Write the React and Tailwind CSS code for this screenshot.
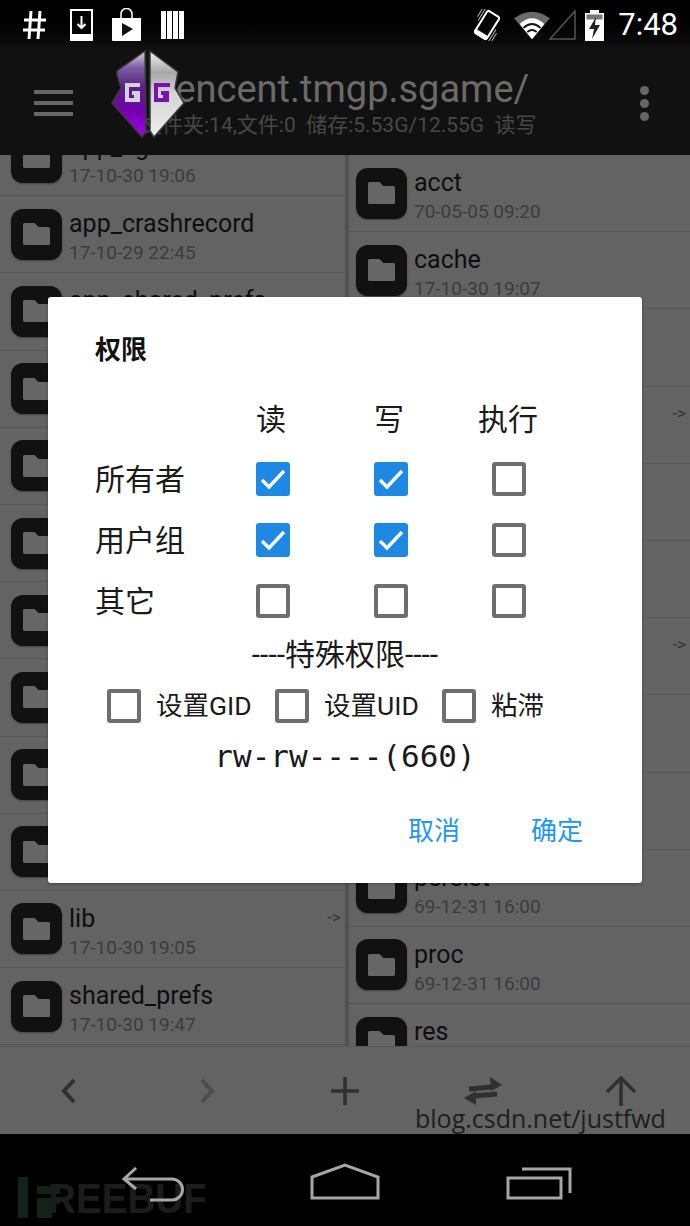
const sans = "font-['Roboto',sans-serif]";
const cjk = "font-['Roboto','Noto_Sans_CJK_SC',sans-serif]";

const leftRows = [
  { name: "app_cgi", date: "17-10-30 19:06" },
  { name: "app_crashrecord", date: "17-10-29 22:45" },
  { name: "app_shared_prefs", date: "" },
  { name: "", date: "" },
  { name: "", date: "" },
  { name: "", date: "" },
  { name: "", date: "" },
  { name: "", date: "" },
  { name: "", date: "" },
  { name: "", date: "" },
  { name: "lib", date: "17-10-30 19:05", link: true },
  { name: "shared_prefs", date: "17-10-30 19:47" },
];

const rightRows = [
  { name: "acct", date: "70-05-05 09:20" },
  { name: "cache", date: "17-10-30 19:07" },
  { name: "", date: "" },
  { name: "", date: "", link: true },
  { name: "", date: "" },
  { name: "", date: "" },
  { name: "", date: "", link: true },
  { name: "", date: "" },
  { name: "", date: "" },
  { name: "persist", date: "69-12-31 16:00" },
  { name: "proc", date: "69-12-31 16:00" },
  { name: "res", date: "" },
];

function FolderTile() {
  return (
    <div className="w-[51px] h-[51px] shrink-0 rounded-[12px] bg-[#111111] flex items-center justify-center shadow-[0_1px_2px_rgba(0,0,0,0.35)]">
      <svg width="27" height="22" viewBox="0 0 27 22">
        <path d="M1.500 0h10l4 4H25.500A1.500 1.500 0 0 1 27 5.500v15a1.500 1.500 0 0 1-1.500 1.500h-24A1.500 1.500 0 0 1 0 20.500v-19A1.500 1.500 0 0 1 1.500 0z" fill="#666666" />
      </svg>
    </div>
  );
}

function FileRow({ row, inset }) {
  return (
    <div className={`relative h-[77.2px] shrink-0 border-b border-[#575757] flex items-center gap-[7px] ${inset}`}>
      <FolderTile />
      <div className={`${sans} flex flex-col`}>
        <span className="pt-[6px] h-[36px] text-[25px] leading-[30px] text-[#0e0e0e] whitespace-nowrap">{row.name}</span>
        <span className="pt-[1px] h-[26px] text-[19px] leading-[26px] text-[#3c3c3c] whitespace-nowrap">{row.date}</span>
      </div>
      {row.link && (
        <span className={`${sans} absolute right-[4px] top-[14px] text-[17px] leading-[24px] text-[#333333]`}>-&gt;</span>
      )}
    </div>
  );
}

function Check({ on }) {
  if (on) {
    return (
      <div className="w-[34px] h-[34px] rounded-[3px] bg-[#1e88e5] flex items-center justify-center">
        <svg width="28" height="24" viewBox="0 0 28 24">
          <path d="M3 13l7 7L25 4" fill="none" stroke="#ffffff" strokeWidth="3.4" />
        </svg>
      </div>
    );
  }
  return <div className="w-[34px] h-[34px] rounded-[3px] border-4 border-[#6e6e6e] bg-white" />;
}

function PermRow({ label, vals }) {
  return (
    <div className="flex items-center h-[34px] mb-[27px]">
      <span className="w-[161px] pt-[2px] text-[30px] leading-[34px] text-[#1a1a1a]">{label}</span>
      <div className="w-[34px] shrink-0"><Check on={vals[0]} /></div>
      <div className="w-[34px] shrink-0 ml-[84px]"><Check on={vals[1]} /></div>
      <div className="w-[34px] shrink-0 ml-[84px]"><Check on={vals[2]} /></div>
    </div>
  );
}

function Logo() {
  return (
    <svg className="absolute left-[110px] top-[49px]" width="76" height="90" viewBox="0 0 76 90">
      <defs>
        <linearGradient id="pl" x1="0" y1="0" x2="0" y2="1">
          <stop offset="0" stopColor="#d9d2de" />
          <stop offset="0.2" stopColor="#7f5aa4" />
          <stop offset="0.42" stopColor="#552480" />
          <stop offset="0.7" stopColor="#7400b0" />
          <stop offset="1" stopColor="#a800f0" />
        </linearGradient>
        <linearGradient id="gr" x1="0" y1="0" x2="0" y2="1">
          <stop offset="0" stopColor="#f4f4f4" />
          <stop offset="0.25" stopColor="#a8a8a8" />
          <stop offset="0.5" stopColor="#d4d4d4" />
          <stop offset="1" stopColor="#eeeeee" />
        </linearGradient>
      </defs>
      <path d="M35 2L7 22 7 26 11 39 2 54 32 88 36 82z" fill="url(#pl)" stroke="#3a3a3a" strokeWidth="1.5" />
      <path d="M40 2L68 23 65 39 74 54 44 88 40 82z" fill="url(#gr)" stroke="#3a3a3a" strokeWidth="1.5" />
      <path d="M30 34H15v19h15V42h-8v4h2v3h-5V38h11z" fill="#d6d0da" />
      <path d="M60 34H44v19h15V42h-8v4h2v3h-5V38h12z" fill="#7a10b0" />
    </svg>
  );
}

function StatusLeft() {
  return (
    <div className="flex items-center h-full">
      <svg className="ml-[23px]" width="24" height="30" viewBox="0 0 24 30">
        <path d="M8 1L6 29M17 1L15 29M1 10h22M0 20h22" stroke="#fff" strokeWidth="3" fill="none" />
      </svg>
      <svg className="ml-[23px]" width="23" height="32" viewBox="0 0 23 32">
        <path d="M1 1h21v30H1z" fill="none" stroke="#fff" strokeWidth="2" />
        <path d="M1 25h21v6H1z" fill="#fff" />
        <path d="M11.500 7v12M7.500 15l4 4 4-4" fill="none" stroke="#fff" strokeWidth="2" />
      </svg>
      <svg className="ml-[18px]" width="31" height="34" viewBox="0 0 31 34">
        <path d="M10 10V6a5.500 5.500 0 0 1 11 0v4" fill="none" stroke="#fff" strokeWidth="1.5" />
        <path d="M1 10h29v22a1 1 0 0 1-1 1H2a1 1 0 0 1-1-1z" fill="#fff" />
        <path d="M11 15l11 6-11 7z" fill="#111" />
      </svg>
      <svg className="ml-[19px]" width="23" height="30" viewBox="0 0 23 30">
        <path d="M0 1h5v28H0zM6 1h5v28H6zM12 1h5v28h-5zM18 1h5v28h-5z" fill="#fff" />
      </svg>
    </div>
  );
}

function StatusRight() {
  return (
    <div className="flex items-center h-full">
      <svg width="26" height="32" viewBox="0 0 26 32">
        <g transform="rotate(32 13 16)">
          <rect x="6" y="3" width="14" height="26" rx="2" fill="none" stroke="#fff" strokeWidth="2" />
          <path d="M6 25h14v4H6z" fill="#fff" />
          <path d="M3 3v14M0.500 5v9M23 15v14M25.500 18v9" stroke="#b5b5b5" strokeWidth="1" />
        </g>
      </svg>
      <svg className="ml-[14px]" width="36" height="30" viewBox="0 0 38 30">
        <path d="M0 8Q19-6 38 8L19 30z" fill="#6a6a6a" />
        <path d="M6 14Q19 2 32 14L19 30z" fill="#fff" />
        <path d="M10 18Q19 10 28 18" fill="none" stroke="#151515" strokeWidth="2" />
        <path d="M14 22.500Q19 18 24 22.500" fill="none" stroke="#151515" strokeWidth="2" />
      </svg>
      <svg className="-ml-[1px]" width="27" height="30" viewBox="0 0 27 30">
        <path d="M1 29L26 1v28z" fill="none" stroke="#555" strokeWidth="1.500" />
      </svg>
      <svg className="ml-[9px]" width="19" height="31" viewBox="0 0 19 31">
        <path d="M5 0h9v3h5v28H0V3h5z" fill="#fff" />
        <path d="M1.500 4.500h16v5h-16z" fill="#777" />
        <path d="M11 7L4 19h5l-2 10 8-14h-5z" fill="#222" />
      </svg>
      <span className={`${sans} ml-[14px] mr-[12px] text-[31px] leading-[38px] text-white`}>7:48</span>
    </div>
  );
}

export default function App() {
  return (
    <div className={`${cjk} relative w-[690px] h-[1226px] overflow-hidden flex flex-col bg-[#636363]`}>
      <header className="h-[155px] shrink-0 bg-[#111111] flex flex-col">
        <div className="h-[50px] shrink-0 flex items-center justify-between bg-gradient-to-b from-[#000000] to-[#111111]">
          <StatusLeft />
          <StatusRight />
        </div>
        <div className="flex-1 flex items-center relative">
          <div className="ml-[34px] w-[39px] flex flex-col gap-[7px]">
            <div className="h-[4px] bg-[#666666]" />
            <div className="h-[4px] bg-[#666666]" />
            <div className="h-[4px] bg-[#666666]" />
          </div>
          <div className="ml-[90px] flex flex-col">
            <span className="text-[38px] leading-[46px] text-[#6a6a6a] whitespace-nowrap -mt-[2px]">tencent.tmgp.sgame/</span>
            <span className="-ml-[22px] text-[21px] leading-[26px] text-[#484848] whitespace-nowrap">文件夹:14,文件:0&nbsp; 储存:5.53G/12.55G&nbsp; 读写</span>
          </div>
          <div className="absolute right-[41px] top-[36px] flex flex-col gap-[4px]">
            <div className="w-[9px] h-[9px] rounded-full bg-[#666666]" />
            <div className="w-[9px] h-[9px] rounded-full bg-[#666666]" />
            <div className="w-[9px] h-[9px] rounded-full bg-[#666666]" />
          </div>
        </div>
      </header>

      <main className="flex-1 flex min-h-0 overflow-hidden">
        <div className="w-[345px] shrink-0 flex flex-col -mt-[36px]">
          {leftRows.map((r, i) => <FileRow key={i} row={r} inset="pl-[11px]" />)}
        </div>
        <div className="flex-1 flex flex-col border-l-[4px] border-[#525252]">
          {rightRows.map((r, i) => <FileRow key={i} row={r} inset="pl-[7px]" />)}
        </div>
      </main>

      <div className="h-[88px] shrink-0 border-t border-[#585858] flex items-center">
        <div className="w-[138px] flex justify-center">
          <svg width="16" height="26" viewBox="0 0 16 26"><path d="M13 2L3 13l10 11" fill="none" stroke="#303030" strokeWidth="4" /></svg>
        </div>
        <div className="w-[138px] flex justify-center">
          <svg width="16" height="26" viewBox="0 0 16 26"><path d="M3 2l10 11L3 24" fill="none" stroke="#4c4c4c" strokeWidth="4" /></svg>
        </div>
        <div className="w-[138px] flex justify-center">
          <svg width="28" height="28" viewBox="0 0 28 28"><path d="M14 0v28M0 14h28" stroke="#303030" strokeWidth="3.500" /></svg>
        </div>
        <div className="w-[138px] flex justify-center">
          <svg width="38" height="28" viewBox="0 0 38 28">
            <path d="M5 12l23-2" stroke="#303030" strokeWidth="5" />
            <path d="M26 0l12 8-11 6z" fill="#303030" />
            <path d="M33 17l-23 2" stroke="#303030" strokeWidth="5" />
            <path d="M12 14L0 21l12 7z" fill="#303030" />
          </svg>
        </div>
        <div className="w-[138px] flex justify-center">
          <svg width="32" height="30" viewBox="0 0 32 30"><path d="M16 30V3M2 16L16 2l14 14" fill="none" stroke="#303030" strokeWidth="3.500" /></svg>
        </div>
      </div>

      <nav className="h-[92px] shrink-0 bg-black relative">
        <div className="absolute left-[18px] top-[43px] w-[10px] h-[41px] bg-[#10221a]" />
        <div className="absolute left-[37px] top-[52px] w-[23px] h-[8px] bg-[#10221a]" />
        <div className="absolute left-[37px] top-[64px] w-[15px] h-[20px] bg-[#10221a]" />
        <div className="absolute left-[52px] top-[64px] w-[8px] h-[6px] bg-[#10221a]" />
        <span className="absolute left-[48px] top-[44px] font-['Liberation_Sans',sans-serif] font-bold text-[42px] leading-[41px] text-[#1c1c1c] scale-x-[0.92] origin-left whitespace-nowrap">REEBUF</span>
        <svg className="absolute left-[122px] top-[33px]" width="64" height="36" viewBox="0 0 64 36">
          <path d="M14 1L2 12l12 10M3 12h47a10 10 0 0 1 0 21H28" fill="none" stroke="#a6a6a6" strokeWidth="3" />
        </svg>
        <svg className="absolute left-[310px] top-[29px]" width="70" height="37" viewBox="0 0 70 37">
          <path d="M2 14L35 2l33 12v21H2z" fill="none" stroke="#a6a6a6" strokeWidth="3" />
        </svg>
        <svg className="absolute left-[506px] top-[32px]" width="66" height="34" viewBox="0 0 66 34">
          <path d="M2 12h53v20H2zM16 3h48v24" fill="none" stroke="#a6a6a6" strokeWidth="3" />
        </svg>
      </nav>

      <div className="absolute left-[48px] top-[297px] w-[594px] h-[586px] bg-white rounded-[3px] shadow-[0_1px_3px_rgba(0,0,0,0.3)] pl-[47px] flex flex-col">
        <h2 className="mt-[33px] text-[26px] leading-[40px] font-bold text-[#111111]">权限</h2>
        <div className="mt-[30px] flex text-[30px] leading-[40px] text-[#1a1a1a]">
          <span className="w-[159px]" />
          <span className="w-[34px] flex justify-center whitespace-nowrap">读</span>
          <span className="w-[34px] ml-[84px] flex justify-center whitespace-nowrap">写</span>
          <span className="w-[34px] ml-[85px] flex justify-center whitespace-nowrap">执行</span>
        </div>
        <div className="mt-[22px]">
          <PermRow label="所有者" vals={[true, true, false]} />
          <PermRow label="用户组" vals={[true, true, false]} />
          <PermRow label="其它" vals={[false, false, false]} />
        </div>
        <div className="-ml-[47px] -mt-[10px] text-center text-[30px] leading-[40px] text-[#1a1a1a]">----特殊权限----</div>
        <div className="mt-[14px] -ml-[47px] flex items-center pl-[59px] text-[26.5px] leading-[34px] text-[#1a1a1a]">
          <Check />
          <span className="ml-[15px] w-[119px]">设置GID</span>
          <Check />
          <span className="ml-[15px] w-[118px]">设置UID</span>
          <Check />
          <span className="ml-[15px]">粘滞</span>
        </div>
        <div className="mt-[11px] -ml-[47px] text-center font-['DejaVu_Sans_Mono',monospace] text-[31px] leading-[44px] text-[#1a1a1a]">rw-rw----(660)</div>
        <div className="mt-[33px] flex justify-end gap-[71px] pr-[59px] text-[26px] leading-[40px] text-[#2196f3]">
          <span>取消</span>
          <span>确定</span>
        </div>
      </div>

      <Logo />

      <span className="absolute left-[415px] top-[1100px] font-['Open_Sans',sans-serif] text-[25px] leading-[36px] text-[#1e1e1e] whitespace-nowrap">blog.csdn.net/justfwd</span>
    </div>
  );
}
